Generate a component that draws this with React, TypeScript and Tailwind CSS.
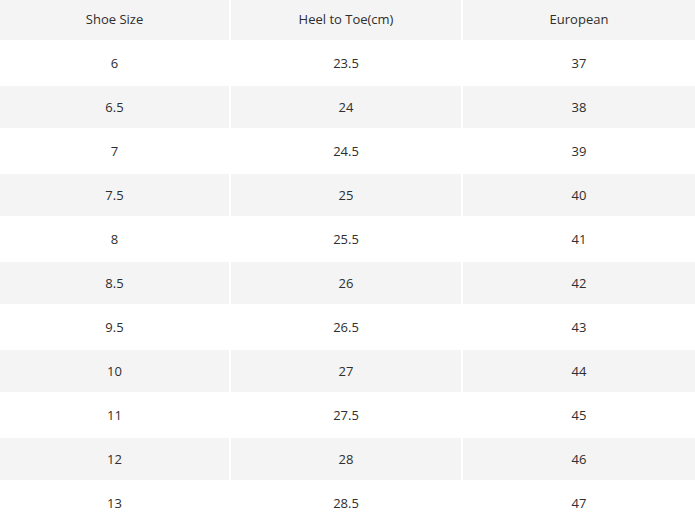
const rows: [string, string, string][] = [
  ["6", "23.5", "37"],
  ["6.5", "24", "38"],
  ["7", "24.5", "39"],
  ["7.5", "25", "40"],
  ["8", "25.5", "41"],
  ["8.5", "26", "42"],
  ["9.5", "26.5", "43"],
  ["10", "27", "44"],
  ["11", "27.5", "45"],
  ["12", "28", "46"],
  ["13", "28.5", "47"],
];

const headers = ["Shoe Size", "Heel to Toe(cm)", "European"];

export default function App() {
  return (
    <div className="h-[524px] w-[695px] overflow-hidden bg-white font-['Open_Sans',sans-serif] text-[13px] text-[#2e2e2e]">
      <div className="grid grid-cols-[229px_230px_232px] gap-x-[2px] gap-y-[2px]">
        {headers.map((h) => (
          <div key={h} className="flex h-[40px] items-center justify-center bg-[#f4f4f4]">
            {h}
          </div>
        ))}
        {rows.map((r, i) =>
          r.map((c, j) => (
            <div
              key={`${i}-${j}`}
              className={`flex h-[42px] items-center justify-center pt-[2px] ${i % 2 === 1 ? "bg-[#f4f4f4]" : "bg-white"}`}
            >
              {c}
            </div>
          ))
        )}
      </div>
    </div>
  );
}
